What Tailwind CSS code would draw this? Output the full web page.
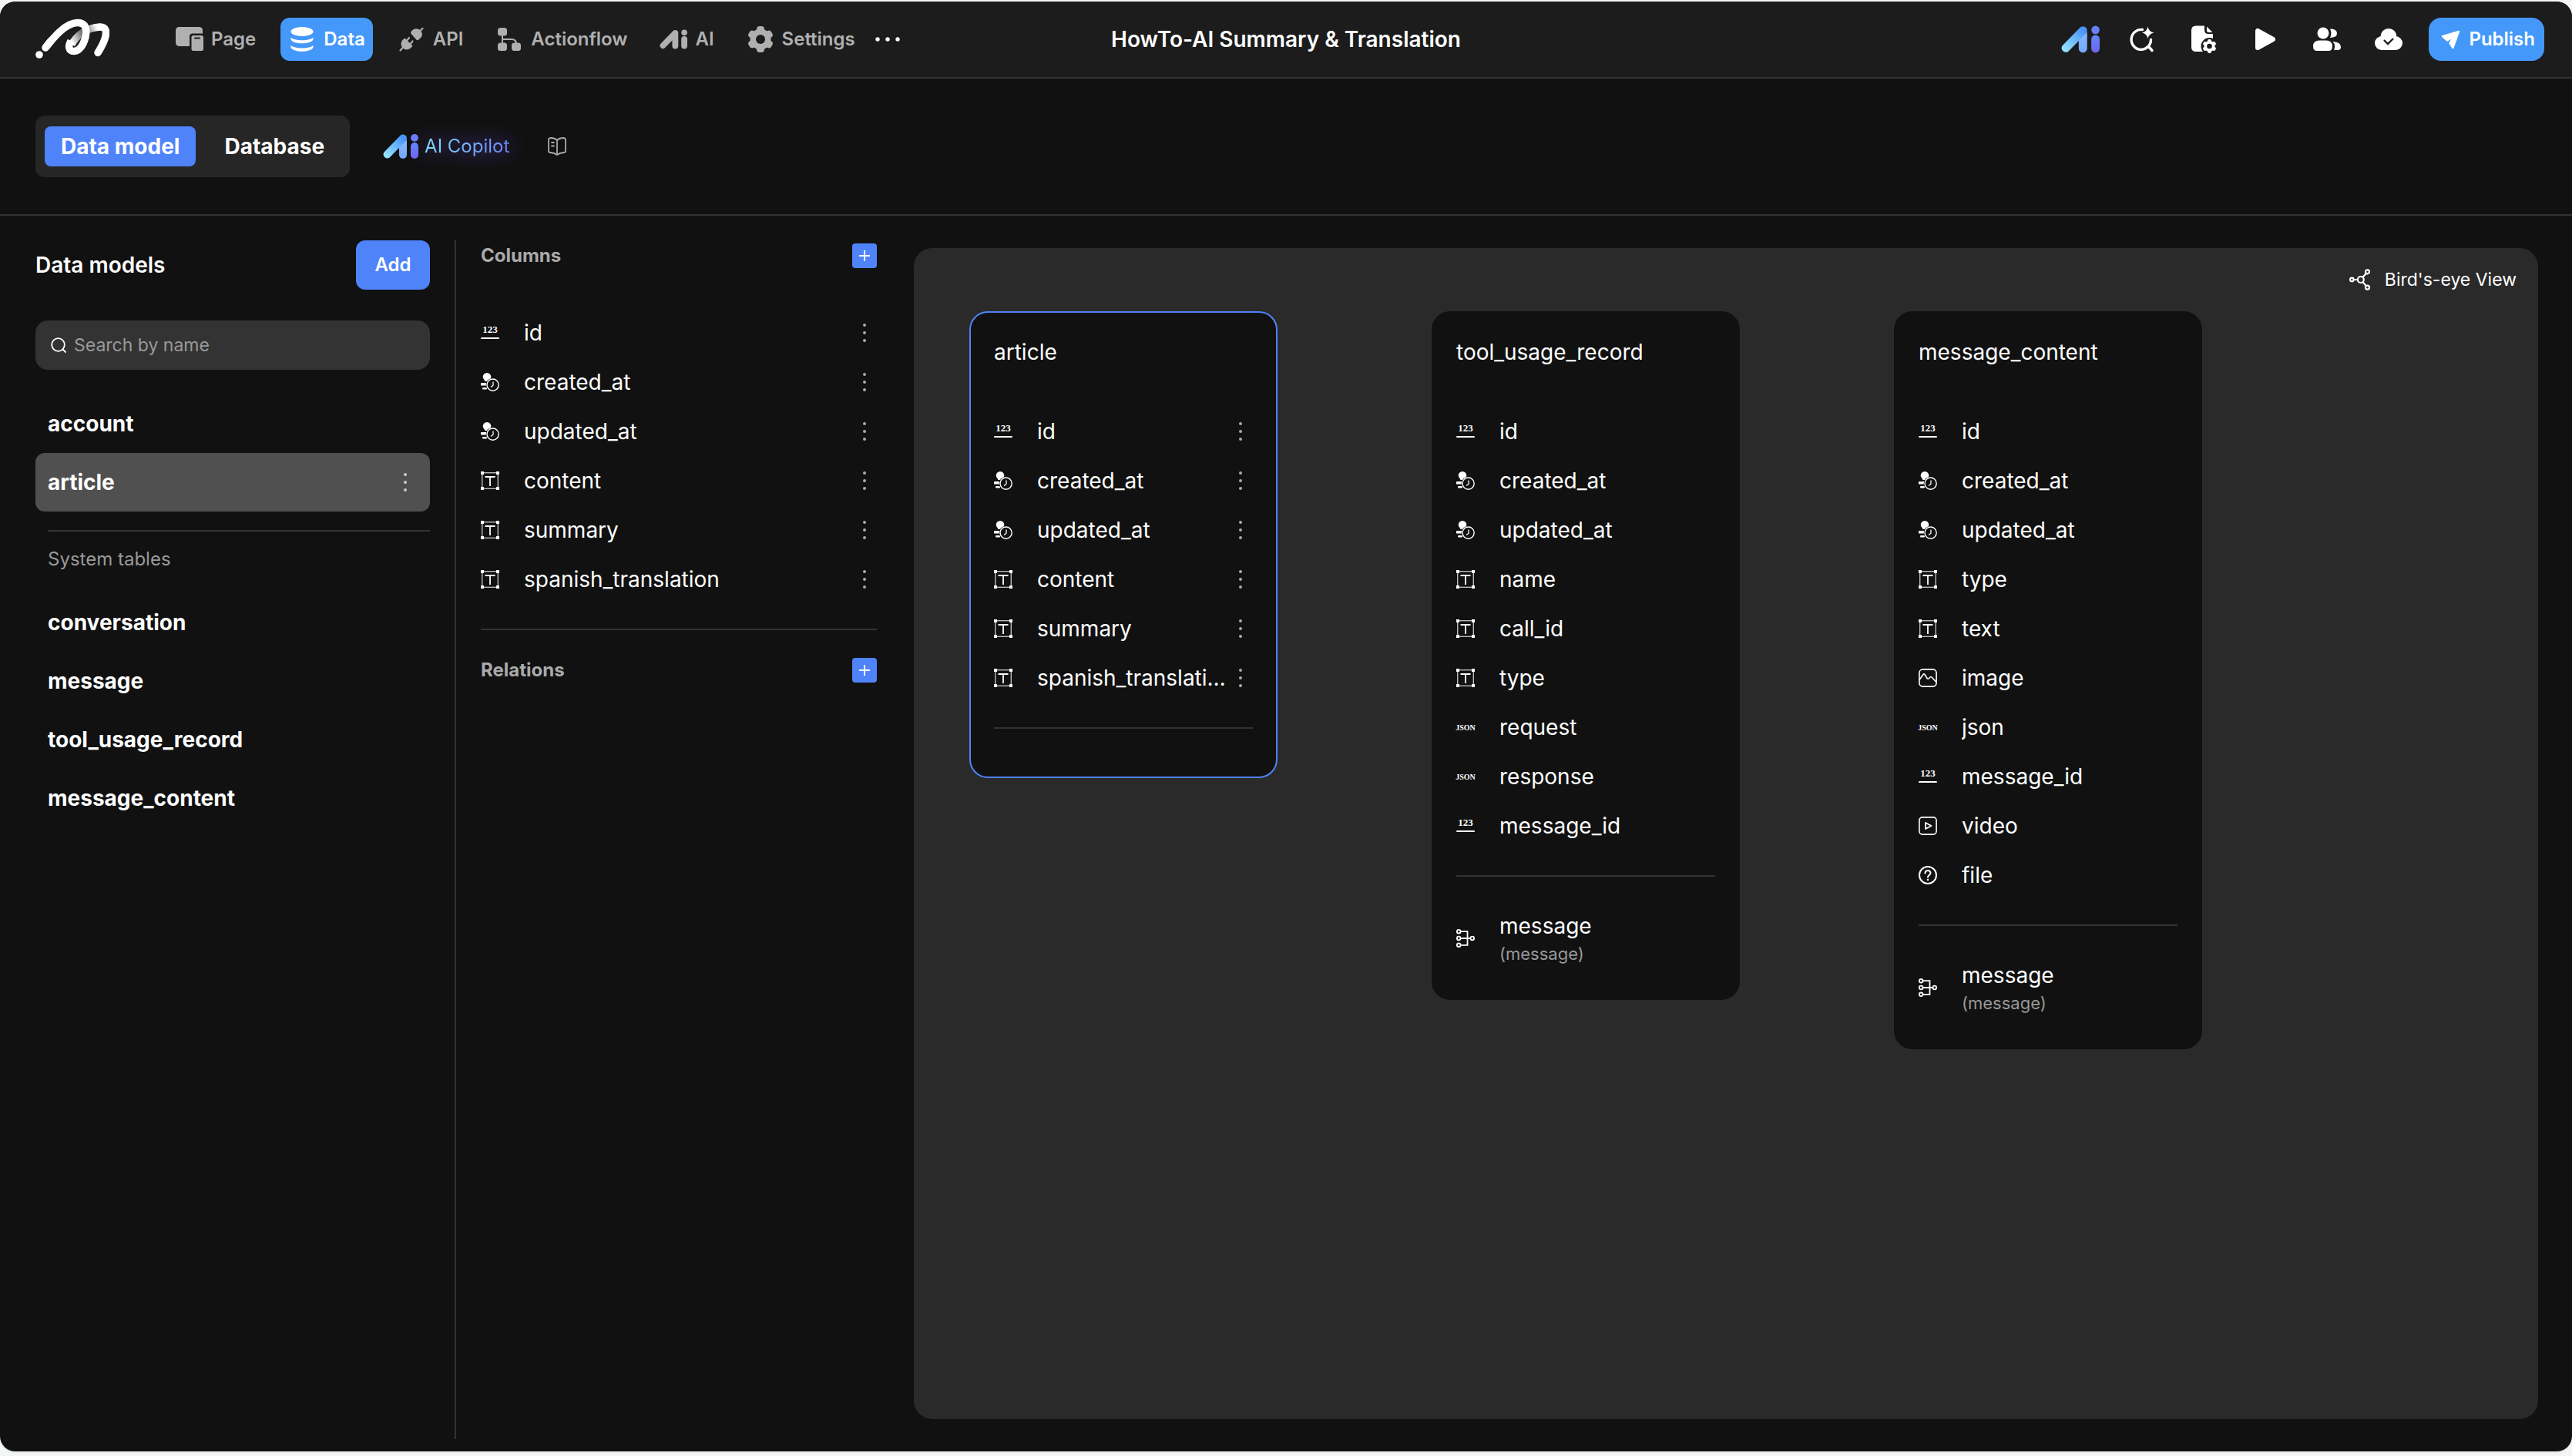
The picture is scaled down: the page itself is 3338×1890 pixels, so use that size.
<!DOCTYPE html>
<html lang="en">
	<head>
		<meta charset="UTF-8" />
		<meta name="viewport" content="width=device-width, initial-scale=1.0" />
		<title>HowTo-AI Summary &amp; Translation</title>
		<script src="https://cdn.jsdelivr.net/npm/@tailwindcss/browser@4"></script>
	</head>
	<body class="h-screen bg-[#f4f5f6] pt-[2px] pb-[6px] font-['Inter','Liberation_Sans',sans-serif] text-white">
		<!-- shared icons, kept rendered (not display: none) so the gradients resolve -->
		<svg class="absolute h-0 w-0" aria-hidden="true">
			<defs>
				<linearGradient id="aiSlant" x1="0" y1="1" x2="1" y2="0">
					<stop offset="0.1" stop-color="#93e2fd" />
					<stop offset="0.85" stop-color="#4a94f9" />
				</linearGradient>
				<linearGradient id="aiLeg" x1="0" y1="0" x2="0" y2="1">
					<stop offset="0" stop-color="#8ebcfc" />
					<stop offset="1" stop-color="#72a9fb" />
				</linearGradient>
				<linearGradient id="aiStem" x1="0" y1="0" x2="0" y2="1">
					<stop offset="0" stop-color="#6288fa" />
					<stop offset="1" stop-color="#7063f0" />
				</linearGradient>
			</defs>
			<symbol id="ai-color" viewBox="0 0 46 32">
				<rect x="21" y="4" width="10" height="28" rx="5" fill="url(#aiLeg)" />
				<path d="M1.5 23.6 22.6 2A5 5 0 0 1 31 5.4Q31 7.6 29 9.8L8.6 30.4A5 5 0 0 1 1.5 23.6Z" fill="url(#aiSlant)" />
				<circle cx="41" cy="4.9" r="4.9" fill="#6780f9" />
				<rect x="36" y="11" width="10" height="21" rx="5" fill="url(#aiStem)" />
			</symbol>
			<symbol id="ai-mono" viewBox="0 0 46 32">
				<rect x="21" y="2" width="10" height="30" rx="5" />
				<path d="M1.5 23.6 22.6 2A5 5 0 0 1 31 5.4Q31 7.6 29 9.8L8.6 30.4A5 5 0 0 1 1.5 23.6Z" />
				<circle cx="41" cy="4.9" r="4.9" />
				<rect x="36" y="11" width="10" height="21" rx="5" />
			</symbol>
			<symbol id="more" viewBox="0 0 24 24">
				<circle cx="12" cy="2" r="2" />
				<circle cx="12" cy="12" r="2" />
				<circle cx="12" cy="22" r="2" />
			</symbol>
			<symbol id="time" viewBox="0 0 24 24">
				<path d="M8 0a5.3 5.3 0 0 1 5.3 5.3C13.300 8 11.500 9 10.500 11H5.500C5 9 2.700 8 2.700 5.300A5.300 5.300 0 0 1 8 0Z" />
				<rect x="0" y="13" width="10" height="3.600" rx="0.500" />
				<rect x="2" y="19" width="6" height="2.400" rx="1" />
				<circle cx="15.600" cy="15.600" r="8.900" fill="#111" />
				<circle cx="15.600" cy="15.600" r="7.600" fill="none" stroke="currentColor" stroke-width="1.400" />
				<path d="M16 11.500v4.700l-3 2.300" fill="none" stroke="currentColor" stroke-width="1.300" />
			</symbol>
			<symbol id="text" viewBox="0 0 24 24">
				<rect x="1.700" y="1.700" width="20.600" height="20.600" fill="none" stroke="#bbb" stroke-width="1.400" />
				<path d="M0 0h4v4H0zM20 0h4v4h-4zM0 20h4v4H0zM20 20h4v4h-4z" />
				<path d="M5.500 7h13M12 7v12" fill="none" stroke="currentColor" stroke-width="1.800" />
			</symbol>
			<symbol id="image" viewBox="0 0 24 24">
				<rect x="0.900" y="0.900" width="22.200" height="22.200" rx="4.500" fill="none" stroke="currentColor" stroke-width="1.600" />
				<path d="M1 14.500 6 7.500Q7 6.300 8 7.500L11 12.500Q12 14 13.500 12.500L15 11Q16 10 17 11L23 17.500" fill="none" stroke="currentColor" stroke-width="1.600" />
			</symbol>
			<symbol id="video" viewBox="0 0 24 24">
				<rect x="0.900" y="0.900" width="22.200" height="22.200" rx="4" fill="none" stroke="currentColor" stroke-width="1.600" />
				<path d="M9 8v8l7.500-4Z" fill="none" stroke="currentColor" stroke-width="1.800" stroke-linejoin="round" />
			</symbol>
			<symbol id="file" viewBox="0 0 24 24">
				<g fill="none" stroke="currentColor" stroke-width="2" stroke-linecap="round">
					<circle cx="12" cy="12" r="11" />
					<path d="M8.500 9.500C8.500 5 15.500 5 15.500 9.300 15.500 12 12 12 12 14.700" />
				</g>
				<circle cx="12" cy="18" r="1.300" />
			</symbol>
			<symbol id="relation" viewBox="0 0 24 24">
				<g fill="none" stroke="currentColor" stroke-width="1.800">
					<circle cx="3.200" cy="3.200" r="2.300" />
					<circle cx="3.200" cy="12" r="2.300" />
					<circle cx="3.200" cy="20.800" r="2.300" />
					<circle cx="20.800" cy="12" r="2.300" />
					<path d="M5.500 3.200h9v17.600h-9M5.500 12h13" />
				</g>
			</symbol>
		</svg>

		<div class="flex h-full flex-col overflow-hidden rounded-[20px] bg-[#111] shadow-sm">
			<!-- top bar -->
			<header class="grid h-[100px] shrink-0 grid-cols-[1fr_auto_1fr] items-center border-b-2 border-[#333] bg-[#1c1c1c] px-9">
				<div class="flex items-center pl-[10px]">
					<a href="#" aria-label="Home" class="mr-[76px]">
						<svg class="h-[54px] w-24" viewBox="0 0 96 54" fill="none" stroke="#fff" stroke-width="9.500" stroke-linecap="round">
							<defs>
								<linearGradient id="fold" gradientUnits="userSpaceOnUse" x1="46" y1="30" x2="84" y2="10">
									<stop offset="0" stop-color="#fff" />
									<stop offset="0.400" stop-color="#777" />
									<stop offset="0.600" stop-color="#888" />
									<stop offset="0.900" stop-color="#fff" />
								</linearGradient>
							</defs>
							<path d="M47 34C53 22 66 12 84 11" stroke="url(#fold)" stroke-linecap="butt" />
							<path d="M13 38C24 24 39 6 54 5.500 66 5 67 15 65 24 62 36 56 42.500 50 42.500 43 42.500 42 36 46 29" stroke-linecap="butt" />
							<path d="M13 38 20 29M84 11C92 11 92 17 91 23 89 32 85 38 81 44.500" />
							<circle cx="5" cy="47" r="4.800" fill="#fff" stroke="none" />
						</svg>
					</a>
					<nav class="flex items-center gap-[22px] text-2xl font-semibold text-[#b0b0b0]">
						<button class="flex h-14 items-center gap-[10px] rounded-xl px-2.5">
							<svg class="h-8 w-9" viewBox="0 0 36 32" fill="currentColor">
								<rect width="35" height="25" rx="4.500" />
								<rect x="18" y="8.500" width="20" height="26" rx="4" fill="#1c1c1c" />
								<rect x="20.500" y="11" width="15.500" height="20" rx="2.500" />
								<rect x="24" y="13.500" width="8" height="2" rx="1" fill="#1c1c1c" />
							</svg>
							Page
						</button>
						<button class="flex h-14 items-center gap-[10px] rounded-xl bg-[#4498f9] px-2.5 text-white">
							<svg class="h-8 w-9" viewBox="0 0 36 32" fill="currentColor">
								<ellipse cx="18" cy="6" rx="14.500" ry="6" />
								<path d="M3.500 13.500C8 18.500 28 18.500 32.500 13.500V16C31 23 5 23 3.500 16ZM3.500 23.700C8 28.700 28 28.700 32.500 23.700V26.200C31 33.500 5 33.500 3.500 26.200Z" />
							</svg>
							Data
						</button>
						<button class="flex h-14 items-center gap-[10px] rounded-xl px-2.5">
							<svg class="h-8 w-9" viewBox="-2.500 -1 36 32" fill="currentColor">
								<path d="M15.500 4.500C19 .5 24 .5 27 3.500 30.200 6.500 30 10.500 27.500 13L24.500 15.700Q23 16.800 21.800 15.500L14.800 7.500Q14 6 15.500 4.500Z" />
								<path d="M7 13.500 17 23.500C14 28.500 8 30 4.500 26.500 .8 23 1 17 7 13.500Z" />
								<path d="M27 4 30 .8M4 26 1 29.500M10 16 12.500 13M14.500 20.500 17 17.500" stroke="currentColor" stroke-width="2.200" stroke-linecap="round" />
							</svg>
							API
						</button>
						<button class="flex h-14 items-center gap-[10px] rounded-xl px-2.5">
							<svg class="h-8 w-9" viewBox="-3 -1 36 32" fill="currentColor">
								<rect width="12" height="10.500" rx="3.500" />
								<rect y="19.500" width="12" height="10.500" rx="3.500" />
								<rect x="18" y="19.500" width="12" height="10.500" rx="3.500" />
								<path d="M6 9v12M6 15h12q6 0 6 6" fill="none" stroke="currentColor" stroke-width="2" />
							</svg>
							Actionflow
						</button>
						<button class="flex h-14 items-center gap-[10px] rounded-xl px-2.5">
							<svg class="h-[26px] w-9" fill="currentColor"><use href="#ai-mono" /></svg>
							AI
						</button>
						<button class="flex h-14 items-center gap-[10px] rounded-xl px-2.5">
							<svg class="h-[34px] w-9" viewBox="-18 -17 36 34" fill="currentColor">
								<circle r="13.500" />
								<rect x="-5" y="-17" width="10" height="34" rx="4" />
								<rect x="-5" y="-17" width="10" height="34" rx="4" transform="rotate(60)" />
								<rect x="-5" y="-17" width="10" height="34" rx="4" transform="rotate(120)" />
								<circle r="6" fill="#1c1c1c" />
							</svg>
							Settings
						</button>
					</nav>
					<button aria-label="More" class="ml-4">
						<svg class="h-6 w-8" viewBox="0 0 32 24" fill="#fff">
							<circle cx="3" cy="12" r="2.700" />
							<circle cx="16" cy="12" r="2.700" />
							<circle cx="29" cy="12" r="2.700" />
						</svg>
					</button>
				</div>

				<h1 class="text-[28px] font-semibold">HowTo-AI Summary &amp; Translation</h1>

				<div class="flex items-center justify-end gap-10">
					<button aria-label="AI assistant" class="flex w-10 justify-center">
						<svg class="h-9 w-[50px] shrink-0"><use href="#ai-color" /></svg>
					</button>
					<button aria-label="Search" class="flex w-10 justify-center">
						<svg class="h-9 w-9" viewBox="0 0 36 36" fill="none" stroke="#fff" stroke-width="3.400" stroke-linecap="round">
							<path d="M18.500 5.500A12.700 13 0 1 0 29.500 18.500M26 27 31 32.500" />
							<path d="M25.500 1.500Q26.500 8 33.500 9.500 26.500 11 25.500 17.500 24.500 11 18 9.500 24.500 8 25.500 1.500Z" fill="#fff" stroke="none" />
						</svg>
					</button>
					<button aria-label="Page settings" class="flex w-10 justify-center">
						<svg class="h-9 w-8" viewBox="0 0 32 36" fill="#fff">
							<path d="M6 .5H17V6Q17 11 22 11H28V34H6Q0 34 0 28V6.500Q0 .5 6 .5Z" />
							<path d="M20 1.500 27.500 9H22.500Q20 9 20 6.500Z" />
							<g transform="translate(23.500 27)">
								<circle r="11" fill="#1c1c1c" />
								<circle r="7" />
								<rect x="-2.500" y="-9" width="5" height="18" rx="2" />
								<rect x="-2.500" y="-9" width="5" height="18" rx="2" transform="rotate(60)" />
								<rect x="-2.500" y="-9" width="5" height="18" rx="2" transform="rotate(120)" />
								<circle r="3.300" fill="#1c1c1c" />
							</g>
						</svg>
					</button>
					<button aria-label="Preview" class="flex w-10 justify-center">
						<svg class="h-8 w-7" viewBox="0 0 28 32" fill="#fff" stroke="#fff" stroke-width="6" stroke-linejoin="round">
							<path d="M4 5V27L24 16Z" />
						</svg>
					</button>
					<button aria-label="Members" class="flex w-10 justify-center">
						<svg class="h-8 w-9" viewBox="0 0 36 32" fill="#fff">
							<ellipse cx="13" cy="8" rx="7.500" ry="7.500" />
							<path d="M8 17.500H17Q25 17.500 25 25 25 31 20 31H5Q0 31 0 25 0 17.500 8 17.500Z" />
							<path d="M22 2.500Q31 2.500 31 8.300 31 14 22 14 25 8.500 22 2.500Z" />
							<path d="M25.500 19Q36 19.500 36 26 36 30 32 30H27Q30 24 25.500 19Z" />
						</svg>
					</button>
					<button aria-label="Saved to cloud" class="flex w-10 justify-center">
						<svg class="h-7 w-9" viewBox="0 0 36 28" fill="#fff">
							<circle cx="18" cy="10.500" r="10.500" />
							<circle cx="9" cy="19" r="9" />
							<circle cx="27" cy="19" r="9" />
							<rect x="9" y="16" width="18" height="12" />
							<path d="m12 15 5 5 7-7" fill="none" stroke="#1c1c1c" stroke-width="2.400" />
						</svg>
					</button>
					<button class="-ml-2 flex h-14 items-center gap-[11px] rounded-2xl bg-[#4498f9] pr-3 pl-4 text-2xl font-semibold">
						<svg class="h-[25px] w-[25px]" viewBox="0 0 26 26" fill="#fff" stroke="#fff" stroke-width="2.500" stroke-linejoin="round">
							<path d="M24 2 2 8.500 8.500 14 18 8 12 17.500 16 24Z" />
						</svg>
						Publish
					</button>
				</div>
			</header>

			<!-- tabs -->
			<div class="flex h-[178px] shrink-0 items-center border-b-2 border-[#333] pl-[46px]">
				<div class="flex h-20 items-center gap-4 rounded-xl bg-[#262626] px-3 text-[28px] font-bold">
					<button class="h-[52px] rounded-lg bg-[#4f83fa] px-[21px]">Data model</button>
					<button class="h-[52px] rounded-lg px-[21px]">Database</button>
				</div>
				<button class="ml-[43px] flex items-center gap-2 text-2xl">
					<svg class="h-8 w-[46px]"><use href="#ai-color" /></svg>
					<span class="drop-shadow-[0_0_12px_#6b3fd0]">
						<span class="bg-linear-to-r from-[#7fdcfb] to-[#6a86f5] bg-clip-text text-transparent">AI Copilot</span>
					</span>
				</button>
				<button aria-label="Docs" class="ml-[50px]">
					<svg class="h-6 w-6" viewBox="0 0 24 24" fill="none" stroke="#aaa" stroke-width="1.800" stroke-linejoin="round" stroke-linecap="round">
						<path d="M12 4Q9 1 4 1 1 1 1 3.500V18Q1 20 3.500 20 9 20.500 12 23 15 20.500 20.500 20 23 20 23 18V3.500Q23 1 20 1 15 1 12 4ZM12 4V23M5 7h3M5 11.500h3" />
					</svg>
				</button>
			</div>

			<main class="flex min-h-0 flex-1 pt-8 pb-4">
				<!-- data models -->
				<aside class="w-[592px] shrink-0 border-r-2 border-[#333] pr-8 pl-[46px]">
					<div class="flex h-16 items-center justify-between">
						<h2 class="text-[28px] font-semibold">Data models</h2>
						<button class="h-16 w-24 rounded-xl bg-[#4f83fa] text-2xl font-semibold">Add</button>
					</div>
					<label class="mt-10 flex h-16 items-center rounded-2xl bg-[#333] px-5">
						<svg class="h-5 w-5" viewBox="0 0 20 20" fill="none" stroke="#fff" stroke-width="1.800" stroke-linecap="round">
							<circle cx="9.500" cy="9.500" r="8.300" />
							<path d="m15.500 15.500 3.500 3.500" />
						</svg>
						<input type="text" aria-label="Search by name" placeholder="Search by name" class="ml-[10px] min-w-0 flex-1 bg-transparent text-[23px] outline-none placeholder:text-[#999]" />
					</label>
					<ul class="mt-8 text-[28px] font-bold">
						<li class="flex h-[76px] items-center pl-4"><a href="#">account</a></li>
						<li class="flex h-[76px] items-center justify-between rounded-xl bg-[#505050] pr-4 pl-4">
							<a href="#">article</a>
							<button aria-label="article options" class="flex w-8 justify-center text-[#ccc]">
								<svg class="h-6 w-6" fill="currentColor"><use href="#more" /></svg>
							</button>
						</li>
					</ul>
					<hr class="mt-6 ml-4 border-t-2 border-[#333]" />
					<h3 class="mb-2 ml-4 h-[72px] text-2xl leading-[72px] text-[#999]">System tables</h3>
					<ul class="text-[28px] font-bold">
						<li class="flex h-[76px] items-center pl-4"><a href="#">conversation</a></li>
						<li class="flex h-[76px] items-center pl-4"><a href="#">message</a></li>
						<li class="flex h-[76px] items-center pl-4"><a href="#">tool_usage_record</a></li>
						<li class="flex h-[76px] items-center pl-4"><a href="#">message_content</a></li>
					</ul>
				</aside>

				<!-- columns of the selected model -->
				<section class="w-[546px] shrink-0 pl-8">
					<div class="flex h-10 items-center justify-between">
						<h2 class="text-2xl font-bold text-[#aaa]">Columns</h2>
						<button aria-label="Add column" class="flex h-8 w-8 items-center justify-center rounded bg-[#4f83fa]">
							<svg class="h-4 w-4" viewBox="0 0 16 16" stroke="#fff" stroke-width="2"><path d="M1 8h14M8 1v14" /></svg>
						</button>
					</div>
					<ul id="columns" class="mt-12 text-[28px]"></ul>
					<hr class="mt-8 border-t-2 border-[#333]" />
					<div class="mt-8 flex h-10 items-center justify-between">
						<h2 class="text-2xl font-bold text-[#aaa]">Relations</h2>
						<button aria-label="Add relation" class="flex h-8 w-8 items-center justify-center rounded bg-[#4f83fa]">
							<svg class="h-4 w-4" viewBox="0 0 16 16" stroke="#fff" stroke-width="2"><path d="M1 8h14M8 1v14" /></svg>
						</button>
					</div>
				</section>

				<!-- canvas -->
				<section class="mt-[10px] mr-11 mb-[26px] ml-12 min-w-0 flex-1 overflow-hidden rounded-3xl bg-[#2a2a2a]">
					<div class="flex h-[82px] items-center justify-end pr-7">
						<button class="flex items-center gap-[18px] text-[23px]">
							<svg class="h-7 w-7" viewBox="0 0 28 28" fill="none" stroke="#fff" stroke-width="2.200">
								<circle cx="3.300" cy="14" r="2.300" />
								<circle cx="14.800" cy="14" r="4" />
								<circle cx="23.500" cy="3.800" r="2.500" />
								<circle cx="23.500" cy="24.200" r="2.500" />
								<path d="M5.600 14h5.200M17.400 11l4.500-5.300M17.400 17l4.500 5.300" />
							</svg>
							Bird's-eye View
						</button>
					</div>
					<div id="cards" class="flex items-start gap-[200px] pl-[72px]"></div>
				</section>
			</main>
		</div>

		<script>
			const article = {
				name: "article",
				selected: true,
				fields: [
					["number", "id"],
					["time", "created_at"],
					["time", "updated_at"],
					["text", "content"],
					["text", "summary"],
					["text", "spanish_translation"],
				],
				relations: [],
			};

			const models = [
				article,
				{
					name: "tool_usage_record",
					fields: [
						["number", "id"],
						["time", "created_at"],
						["time", "updated_at"],
						["text", "name"],
						["text", "call_id"],
						["text", "type"],
						["json", "request"],
						["json", "response"],
						["number", "message_id"],
					],
					relations: ["message"],
				},
				{
					name: "message_content",
					fields: [
						["number", "id"],
						["time", "created_at"],
						["time", "updated_at"],
						["text", "type"],
						["text", "text"],
						["image", "image"],
						["json", "json"],
						["number", "message_id"],
						["video", "video"],
						["file", "file"],
					],
					relations: ["message"],
				},
			];

			// types whose icon is a word rather than a drawing
			const wordIcons = {
				number: `
					<svg class="h-6 w-6 shrink-0 font-['Liberation_Serif',serif] text-[13px] font-bold" viewBox="0 0 24 24" fill="currentColor">
						<text x="12" y="12" text-anchor="middle">123</text>
						<rect y="18" width="24" height="2" rx="1" />
					</svg>`,
				json: `
					<svg class="h-6 w-6 shrink-0 overflow-visible font-['Liberation_Serif',serif] text-[10px] font-bold" viewBox="0 0 24 24" fill="currentColor">
						<text x="12" y="16" text-anchor="middle">JSON</text>
					</svg>`,
			};

			const icon = (name) =>
				wordIcons[name] || `<svg class="h-6 w-6 shrink-0" fill="currentColor"><use href="#${name}" /></svg>`;

			const field = ([type, name], menu) => `
				<li class="flex h-16 items-center">
					${icon(type)}
					<span class="ml-8 min-w-0 flex-1 truncate">${name}</span>
					${menu ? `<button aria-label="${name} options" class="flex w-8 shrink-0 justify-center text-[#aaa]">${icon("more")}</button>` : ""}
				</li>`;

			const relation = (name) => `
				<li class="flex h-24 items-center">
					${icon("relation")}
					<div class="ml-8">
						<div class="leading-[40px]">${name}</div>
						<div class="text-[22px] leading-[32px] text-[#999]">(${name})</div>
					</div>
				</li>`;

			const card = (m) => `
				<article class="w-[400px] shrink-0 rounded-3xl border-2 bg-[#111] px-[30px] pb-[30px] text-[28px] ${m.selected ? "border-[#4f83fa]" : "border-[#111]"}">
					<h2 class="mb-5 h-[102px] leading-[102px]">${m.name}</h2>
					<ul>${m.fields.map((f) => field(f, m.selected)).join("")}</ul>
					<hr class="mt-8 border-t-2 border-[#333]" />
					<ul class="mt-8">${m.relations.map(relation).join("")}</ul>
				</article>`;

			document.getElementById("columns").innerHTML = article.fields.map((f) => field(f, true)).join("");
			document.getElementById("cards").innerHTML = models.map(card).join("");
		</script>
	</body>
</html>
